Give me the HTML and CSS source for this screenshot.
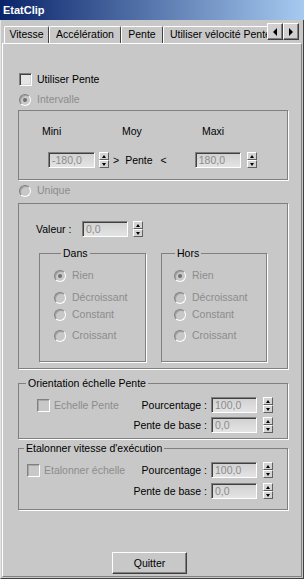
FILE: index.html
```html
<!DOCTYPE html>
<html lang="fr">
<head>
    <meta charset="UTF-8">
    <meta name="viewport" content="width=device-width, initial-scale=1.0">
    <title>EtatClip</title>
    <link rel="stylesheet" href="styles.css">
</head>
<body>
    <div class="window">
        <div class="title-bar">EtatClip</div>

        <div class="tab-strip">
            <div class="tabs">
                <div class="tab tab-speed">Vitesse</div>
                <div class="tab tab-accel">Accélération</div>
                <div class="tab tab-slope active">Pente</div>
                <div class="tab tab-velocity">Utiliser vélocité Pente</div>
            </div>
            <div class="scroll-btn"><span class="arrow left"></span></div>
            <div class="scroll-btn"><span class="arrow right"></span></div>
        </div>

        <div class="panel">
            <label class="option use-slope"><span class="check"></span>Utiliser Pente</label>
            <label class="option mode-range disabled"><span class="radio on"></span>Intervalle</label>

            <!-- Intervalle -->
            <div class="group range">
                <div class="range-heads">
                    <span>Mini</span>
                    <span>Moy</span>
                    <span>Maxi</span>
                </div>
                <div class="range-row">
                    <span class="field">-180,0</span>
                    <span class="spin"><i class="up"></i><i class="down"></i></span>
                    <span class="sign gt">&gt;</span>
                    <span class="sign word">Pente</span>
                    <span class="sign lt">&lt;</span>
                    <span class="field max">180,0</span>
                    <span class="spin wide-gap"><i class="up"></i><i class="down"></i></span>
                </div>
            </div>

            <label class="option mode-single disabled"><span class="radio"></span>Unique</label>

            <!-- Unique -->
            <div class="group single">
                <div class="value-row">
                    <span class="value-label">Valeur :</span>
                    <span class="field">0,0</span>
                    <span class="spin"><i class="up"></i><i class="down"></i></span>
                </div>
                <div class="ease-groups">
                    <fieldset class="ease ease-in">
                        <legend>Dans</legend>
                        <label class="option disabled first"><span class="radio on"></span>Rien</label>
                        <label class="option disabled second"><span class="radio"></span>Décroissant</label>
                        <label class="option disabled third"><span class="radio"></span>Constant</label>
                        <label class="option disabled fourth"><span class="radio"></span>Croissant</label>
                    </fieldset>
                    <fieldset class="ease ease-out">
                        <legend>Hors</legend>
                        <label class="option disabled first"><span class="radio on"></span>Rien</label>
                        <label class="option disabled second"><span class="radio"></span>Décroissant</label>
                        <label class="option disabled third"><span class="radio"></span>Constant</label>
                        <label class="option disabled fourth"><span class="radio"></span>Croissant</label>
                    </fieldset>
                </div>
            </div>

            <fieldset class="box orient">
                <legend>Orientation échelle Pente</legend>
                <div class="box-row">
                    <label class="option disabled"><span class="check off"></span>Echelle Pente</label>
                    <span class="row-label">Pourcentage :</span>
                    <span class="field">100,0</span>
                    <span class="spin"><i class="up"></i><i class="down"></i></span>
                </div>
                <div class="box-row">
                    <span class="row-label">Pente de base :</span>
                    <span class="field">0,0</span>
                    <span class="spin"><i class="up"></i><i class="down"></i></span>
                </div>
            </fieldset>

            <fieldset class="box calib">
                <legend>Etalonner vitesse d'exécution</legend>
                <div class="box-row">
                    <label class="option disabled"><span class="check off"></span>Etalonner échelle</label>
                    <span class="row-label">Pourcentage :</span>
                    <span class="field">100,0</span>
                    <span class="spin"><i class="up"></i><i class="down"></i></span>
                </div>
                <div class="box-row">
                    <span class="row-label">Pente de base :</span>
                    <span class="field">0,0</span>
                    <span class="spin"><i class="up"></i><i class="down"></i></span>
                </div>
            </fieldset>

            <button class="button quit">Quitter</button>
        </div>
    </div>
</body>
</html>
```

FILE: styles.css
```css
* {
    margin: 0;
    padding: 0;
    box-sizing: border-box;
}

body {
    font-family: 'Liberation Sans', Arial, sans-serif;
    font-size: 10.5px;
    color: #000;
    background-color: #c8c8c8;
}

.window {
    width: 304px;
    height: 579px;
    display: flex;
    flex-direction: column;
    border-left: 1px solid #e4e4e4;
    border-right: 1px solid #404040;
    border-bottom: 1px solid #404040;
}

/* title */
.title-bar {
    height: 20px;
    line-height: 20px;
    padding-left: 3px;
    margin-left: -1px;
    margin-right: -1px;
    color: #fff;
    font-weight: bold;
    font-size: 11px;
    background: linear-gradient(to right, #0a246a, #a6caf0);
}

/* tabs */
.tab-strip {
    height: 23px;
    display: flex;
}

.tabs {
    flex: 0 0 266px;
    display: flex;
    align-items: flex-end;
    padding-left: 3px;
    overflow: hidden;
}

.tab {
    flex-shrink: 0;
    height: 17px;
    line-height: 15px;
    text-align: center;
    border-top: 1px solid #fff;
    border-left: 1px solid #fff;
    border-right: 1px solid #404040;
    border-radius: 2px 2px 0 0;
    white-space: nowrap;
}

.tab-speed { width: 45px; }
.tab-accel { width: 72px; }
.tab-slope { width: 42px; }
.tab-velocity { padding: 0 6px; }

.scroll-btn {
    width: 16px;
    height: 17px;
    margin-top: 3px;
    display: flex;
    align-items: center;
    justify-content: center;
    border: 1px solid;
    border-color: #fff #404040 #404040 #fff;
    box-shadow: inset -1px -1px 0 #808080;
    background: #d0d0d0;
}

.arrow {
    width: 0;
    height: 0;
    border-top: 4px solid transparent;
    border-bottom: 4px solid transparent;
}

.arrow.left { border-right: 4px solid #000; }
.arrow.right { border-left: 4px solid #000; }

/* page */
.panel {
    flex: 1;
    margin: 0 1px 1px 1px;
    padding-left: 15px;
    border-top: 1px solid #fff;
    border-left: 1px solid #fff;
    border-right: 1px solid #808080;
    border-bottom: 1px solid #808080;
}

.option {
    display: flex;
    align-items: center;
    gap: 6px;
    height: 13px;
    line-height: 13px;
    white-space: nowrap;
}

.option.disabled {
    color: #8c8c8c;
}

.use-slope {
    margin-top: 29px;
    margin-left: 1px;
    gap: 5px;
}

.mode-range {
    margin-top: 7px;
    margin-left: 1px;
}

.mode-single {
    margin-top: 4px;
    margin-left: 1px;
}

.check {
    width: 13px;
    height: 13px;
    border: 1px solid;
    border-color: #808080 #fff #fff #808080;
    box-shadow: inset 1px 1px 0 #404040, inset -1px -1px 0 #d4d4d4;
    background: #e6e6e6;
}

.check.off {
    background: #c8c8c8;
    box-shadow: inset 1px 1px 0 #a8a8a8;
}

.radio {
    width: 12px;
    height: 12px;
    border-radius: 50%;
    border: 1px solid;
    border-color: #808080 #fff #fff #808080;
    box-shadow: inset 1px 1px 0 #a0a0a0;
    background: #c8c8c8;
    display: flex;
    align-items: center;
    justify-content: center;
}

.radio.on::after {
    content: "";
    width: 4px;
    height: 4px;
    border-radius: 50%;
    background: #707070;
}

.field {
    display: inline-block;
    width: 46px;
    height: 16px;
    line-height: 14px;
    padding-left: 3px;
    border: 1px solid;
    border-color: #808080 #fff #fff #808080;
    box-shadow: inset 1px 1px 0 #404040;
    background: linear-gradient(#d0d0d0, #e4e4e4);
    color: #8c8c8c;
}

.spin {
    width: 10px;
    height: 16px;
    display: flex;
    flex-direction: column;
}

.spin i {
    flex: 1;
    display: flex;
    align-items: center;
    justify-content: center;
    border: 1px solid;
    border-color: #fff #606060 #606060 #fff;
    background: #d4d4d4;
}

.spin i::after {
    content: "";
    border-left: 2px solid transparent;
    border-right: 2px solid transparent;
}

.spin .up::after { border-bottom: 3px solid #000; }
.spin .down::after { border-top: 3px solid #000; }

/* group boxes */
.group {
    width: 270px;
    border: 1px solid #808080;
    box-shadow: 1px 1px 0 #fff;
}

.range {
    margin-top: 4px;
    height: 70px;
    padding-top: 14px;
}

.range-heads {
    display: grid;
    grid-template-columns: 80px 80px auto;
    padding-left: 23px;
    line-height: 12px;
}

.range-row {
    display: flex;
    align-items: center;
    margin-top: 15px;
    padding-left: 29px;
}

.range-row .field { width: 47px; }
.range-row .field.max { width: 46px; margin-left: 28px; }
.range-row .spin { margin-left: 4px; }
.range-row .spin.wide-gap { margin-left: 6px; }
.sign.gt { margin-left: 4px; }
.sign.word { margin-left: 6px; }
.sign.lt { margin-left: 8px; }

.single {
    margin-top: 6px;
    height: 166px;
    padding-top: 17px;
}

.value-row {
    display: flex;
    align-items: center;
    padding-left: 17px;
}

.value-label { width: 46px; }
.value-row .spin { margin-left: 5px; }

.ease-groups {
    display: flex;
    gap: 15px;
    margin-top: 10px;
    padding-left: 20px;
}

fieldset {
    border: 1px solid #808080;
    box-shadow: 1px 1px 0 #fff;
    min-width: 0;
}

legend {
    line-height: 12px;
    padding: 0 2px;
    margin-left: 7px;
}

.ease {
    width: 107px;
    padding: 10px 0 19px 14px;
}

.ease-out {
    width: 106px;
    padding-left: 12px;
}

.ease-out legend { margin-left: 1px; }

.ease .second { margin-top: 9px; }
.ease .third { margin-top: 4px; }
.ease .fourth { margin-top: 8px; }

.box {
    width: 270px;
    padding: 8px 14px 5px 0;
}

.orient {
    margin-top: 8px;
}

.calib {
    margin-top: 3px;
    padding-bottom: 10px;
}

.calib legend { margin-left: 5px; }

.box-row {
    display: flex;
    align-items: center;
    justify-content: flex-end;
}

.box-row + .box-row {
    margin-top: 4px;
}

.calib .box-row + .box-row {
    margin-top: 5px;
}

.box-row .option {
    margin-right: auto;
    gap: 4px;
}

.orient .box-row .option { margin-left: 18px; }
.calib .box-row .option { margin-left: 8px; }

.row-label { margin-right: 4px; }
.box-row .spin { margin-left: 6px; }

.button {
    display: block;
    width: 75px;
    height: 22px;
    margin: 42px 0 0 94px;
    font-family: 'Liberation Sans', Arial, sans-serif;
    font-size: 10.5px;
    color: #000;
    border: 1px solid;
    border-color: #fff #404040 #404040 #fff;
    box-shadow: inset -1px -1px 0 #808080;
    background: #c8c8c8;
    cursor: pointer;
}
```
